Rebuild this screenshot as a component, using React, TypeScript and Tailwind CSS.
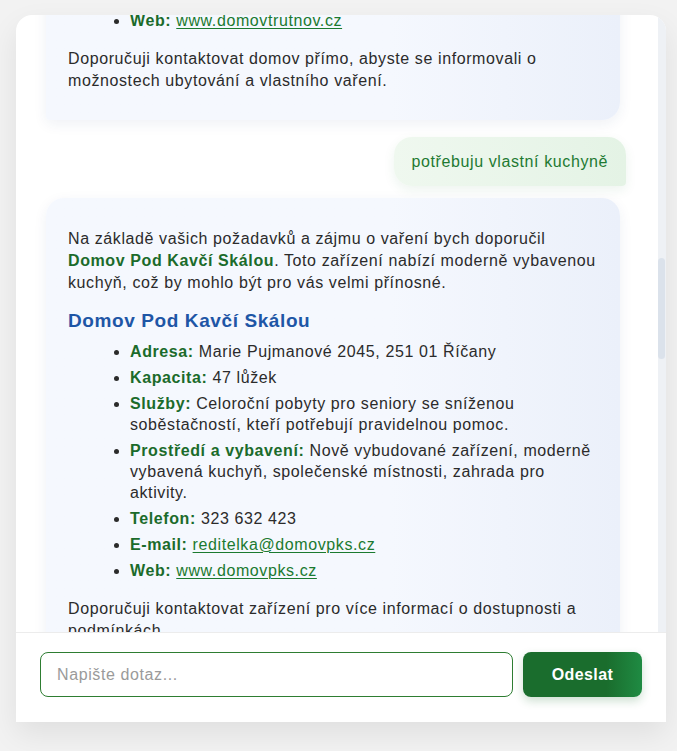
import React from "react";

const font = { fontFamily: '"Liberation Sans", Arial, Helvetica, sans-serif' };

function Label({ children }: { children: React.ReactNode }) {
  return <strong className="font-bold text-[#1b6b2b]">{children}</strong>;
}

function Link({ children }: { children: React.ReactNode }) {
  return (
    <a href="#" className="text-[#1b7a30] underline underline-offset-2 decoration-1">
      {children}
    </a>
  );
}

function BotBubble({ children, className = "" }: { children: React.ReactNode; className?: string }) {
  return (
    <div
      className={
        "w-[574px] flex flex-col px-[22px] pt-[20px] pb-[20px] rounded-[18px] rounded-bl-[4px] bg-linear-to-r from-[#f5f8fe] from-60% to-[#ebf0fa] shadow-[0_4px_14px_rgba(30,60,120,0.07)] text-[16px] text-[#2b2b2b] " +
        className
      }
    >
      {children}
    </div>
  );
}

export default function App() {
  return (
    <div
      className="min-h-screen h-[751px] bg-[#f2f2f2] pt-[15px] px-[16px] overflow-hidden tracking-[0.6px]"
      style={font}
    >
      <div className="w-[650px] h-[707px] bg-white rounded-t-[16px] shadow-[0_12px_30px_rgba(0,0,0,0.08)] flex flex-col overflow-hidden">
        {/* messages */}
        <div className="relative h-[617px] overflow-hidden">
          <div className="flex flex-col pl-[30px] pr-[40px]">
            <BotBubble className="-mt-[51.5px]">
              <ul className="list-disc pl-[62px] mb-[12px]">
                <li className="leading-[21px] mb-[5px]">
                  <Label>E-mail:</Label> <Link>info@domovtrutnov.cz</Link>
                </li>
                <li className="leading-[21px] mb-[5px]">
                  <Label>Web:</Label> <Link>www.domovtrutnov.cz</Link>
                </li>
              </ul>
              <p className="leading-[22px] mb-[8.5px]">
                Doporučuji kontaktovat domov přímo, abyste se informovali o možnostech ubytování a vlastního vaření.
              </p>
            </BotBubble>

            <div className="self-end mt-[17px] mb-[12px] px-[18px] py-[13.5px] rounded-[18px] rounded-br-[4px] bg-linear-to-r from-[#eff8ef] to-[#e4f3e5] shadow-[0_4px_12px_rgba(30,110,45,0.08)] text-[16px] leading-[22px] text-[#1e7a32]">
              potřebuju vlastní kuchyně
            </div>

            <BotBubble>
              <p className="leading-[22px] mt-[10px]">
                Na základě vašich požadavků a zájmu o vaření bych doporučil{" "}
                <Label>Domov Pod Kavčí Skálou</Label>. Toto zařízení nabízí moderně vybavenou kuchyň, což by mohlo
                být pro vás velmi přínosné.
              </p>
              <h3 className="mt-[14px] mb-[6.5px] text-[19px] leading-[26px] font-bold text-[#1e56a6]">
                Domov Pod Kavčí Skálou
              </h3>
              <ul className="list-disc pl-[62px] mb-[12px]">
                <li className="leading-[21px] mb-[5px]">
                  <Label>Adresa:</Label> Marie Pujmanové 2045, 251 01 Říčany
                </li>
                <li className="leading-[21px] mb-[5px]">
                  <Label>Kapacita:</Label> 47 lůžek
                </li>
                <li className="leading-[21px] mb-[5px]">
                  <Label>Služby:</Label> Celoroční pobyty pro seniory se sníženou soběstačností, kteří potřebují
                  pravidelnou pomoc.
                </li>
                <li className="leading-[21px] mb-[5px]">
                  <Label>Prostředí a vybavení:</Label> Nově vybudované zařízení, moderně vybavená kuchyň, společenské
                  místnosti, zahrada pro aktivity.
                </li>
                <li className="leading-[21px] mb-[5px]">
                  <Label>Telefon:</Label> 323 632 423
                </li>
                <li className="leading-[21px] mb-[5px]">
                  <Label>E-mail:</Label> <Link>reditelka@domovpks.cz</Link>
                </li>
                <li className="leading-[21px] mb-[5px]">
                  <Label>Web:</Label> <Link>www.domovpks.cz</Link>
                </li>
              </ul>
              <p className="leading-[22px] mb-[8.5px]">
                Doporučuji kontaktovat zařízení pro více informací o dostupnosti a podmínkách.
              </p>
            </BotBubble>
            <div className="h-[20px] shrink-0" />
          </div>

          {/* scrollbar */}
          <div className="absolute right-0 top-0 bottom-0 w-[8px] bg-[#eef1f5]">
            <div className="absolute left-0 top-[243px] h-[101px] w-[7px] rounded-full bg-[#dbe2eb]" />
          </div>
        </div>

        {/* input area */}
        <div className="flex items-center gap-[10px] border-t border-[#ececec] pt-[19px] pb-[25px] pl-[24px] pr-[24px]">
          <input
            type="text"
            placeholder="Napište dotaz..."
            className="flex-1 h-[45px] rounded-[8px] border border-[#2e7d32] px-[16px] text-[16px] tracking-[0.6px] text-[#2b2b2b] placeholder:text-[#9a9a9a] outline-none bg-white"
            style={font}
          />
          <button
            className="w-[119px] h-[45px] rounded-[8px] bg-linear-to-r from-[#1a6d2d] from-70% to-[#1f8b43] text-white font-bold text-[16px] tracking-[0.4px] shadow-[0_4px_10px_rgba(27,110,45,0.22)]"
            style={font}
          >
            Odeslat
          </button>
        </div>
      </div>
    </div>
  );
}
